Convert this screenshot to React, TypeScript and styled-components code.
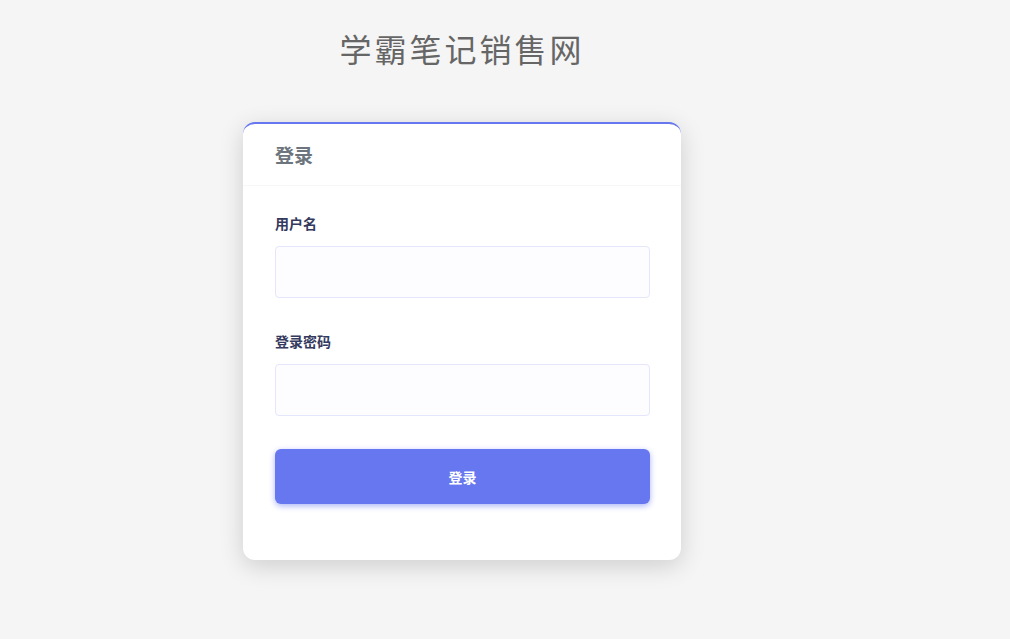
import React from 'react'
import styled, { createGlobalStyle } from 'styled-components'

const GlobalStyle = createGlobalStyle`
  html, body {
    margin: 0;
    padding: 0;
    background: #f5f5f5;
    font-family: "Noto Sans CJK SC", "Noto Sans", sans-serif;
  }
`

const Page = styled.div`
  min-height: 639px;
  padding: 0 0 0 243px;
  box-sizing: border-box;
`

const Column = styled.div`
  width: 438px;
  display: flex;
  flex-direction: column;
  align-items: center;
`

const SiteTitle = styled.h1`
  margin: 26px 0 0;
  height: 44px;
  line-height: 44px;
  font-size: 32px;
  font-weight: 400;
  letter-spacing: 3px;
  color: #666666;
`

const Card = styled.div`
  margin-top: 52px;
  width: 100%;
  background: #ffffff;
  border-top: 2px solid #6777ef;
  border-radius: 12px;
  box-shadow: 0 6px 24px rgba(0, 0, 0, 0.16);
  box-sizing: border-box;
`

const CardHeader = styled.div`
  height: 61px;
  display: flex;
  align-items: center;
  padding: 0 32px;
  border-bottom: 1px solid #f7f7f7;
`

const CardTitle = styled.h4`
  margin: 0;
  font-size: 19px;
  font-weight: 700;
  color: #6c757d;
`

const CardBody = styled.form`
  padding: 27px 31px 56px 32px;
  display: flex;
  flex-direction: column;
`

const Field = styled.div`
  display: flex;
  flex-direction: column;
  margin-bottom: 33px;
`

const Label = styled.label`
  font-size: 14px;
  font-weight: 700;
  color: #34395e;
  line-height: 20px;
  margin-bottom: 13px;
`

const Input = styled.input`
  height: 52px;
  box-sizing: border-box;
  border: 1px solid #e4e6fc;
  border-radius: 4px;
  background: #fdfdff;
  padding: 0 15px;
  font-size: 14px;
  outline: none;
`

const SubmitButton = styled.button`
  height: 55px;
  border: none;
  border-radius: 6px;
  background: #6777ef;
  color: #ffffff;
  font-size: 14px;
  font-weight: 700;
  font-family: inherit;
  box-shadow: 0 2px 6px #acb5f6;
  cursor: pointer;
`

export default function App() {
  return (
    <Page>
      <GlobalStyle />
      <Column>
        <SiteTitle>学霸笔记销售网</SiteTitle>
        <Card>
          <CardHeader>
            <CardTitle>登录</CardTitle>
          </CardHeader>
          <CardBody onSubmit={e => e.preventDefault()}>
            <Field>
              <Label htmlFor="username">用户名</Label>
              <Input id="username" type="text" />
            </Field>
            <Field>
              <Label htmlFor="password">登录密码</Label>
              <Input id="password" type="password" />
            </Field>
            <SubmitButton type="submit">登录</SubmitButton>
          </CardBody>
        </Card>
      </Column>
    </Page>
  )
}
